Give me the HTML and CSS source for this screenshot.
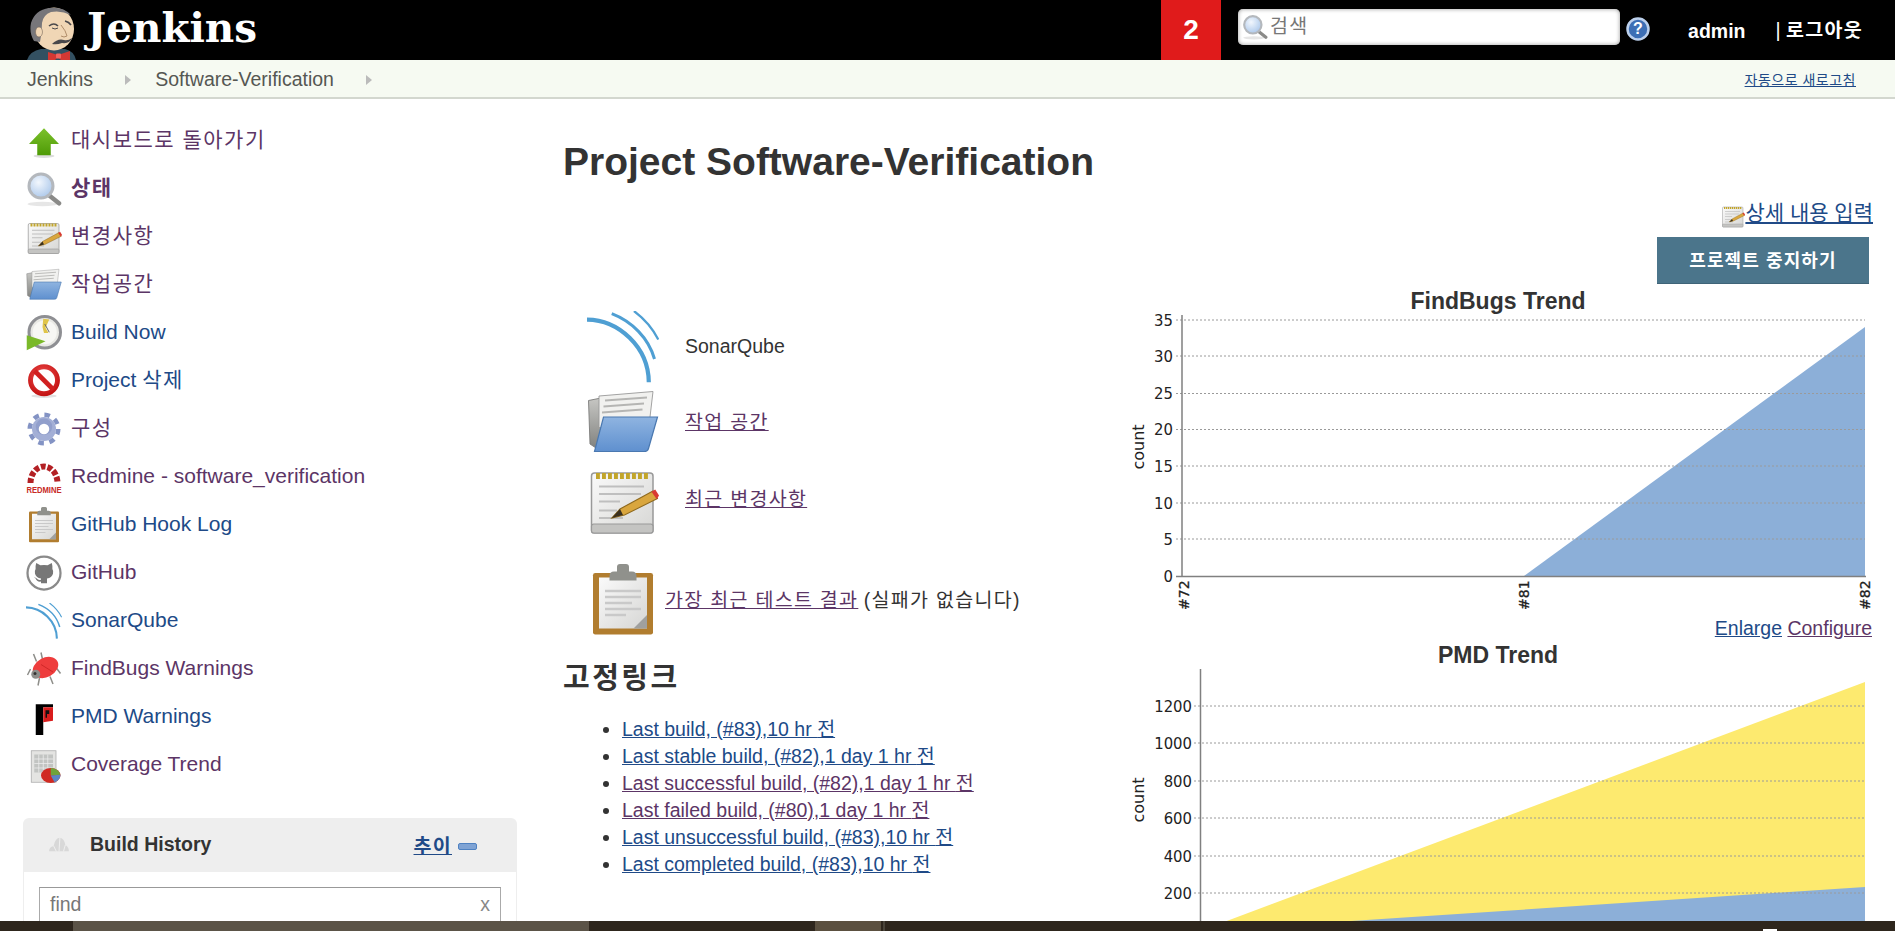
FILE: index.html
```html
<!DOCTYPE html>
<html lang="ko">
<head>
<meta charset="utf-8">
<title>Software-Verification [Jenkins]</title>
<link rel="stylesheet" href="styles.css">
</head>
<body>
<svg class="defs" aria-hidden="true">
  <defs>
    <linearGradient id="gGreen" x1="0" y1="0" x2="0" y2="1"><stop offset="0" stop-color="#7cc22c"/><stop offset="1" stop-color="#4e9a06"/></linearGradient>
    <linearGradient id="gBlue" x1="0" y1="0" x2="0" y2="1"><stop offset="0" stop-color="#8fb4e0"/><stop offset="1" stop-color="#5f90cf"/></linearGradient>
    <linearGradient id="gPaper" x1="0" y1="0" x2="1" y2="1"><stop offset="0" stop-color="#fafafa"/><stop offset="1" stop-color="#d6d6d4"/></linearGradient>
    <linearGradient id="gGray" x1="0" y1="0" x2="0" y2="1"><stop offset="0" stop-color="#c9c9c6"/><stop offset="1" stop-color="#7f807d"/></linearGradient>
    <radialGradient id="gLens" cx=".4" cy=".35" r=".7"><stop offset="0" stop-color="#f2f7fd"/><stop offset="1" stop-color="#a9c6ea"/></radialGradient>
    <radialGradient id="gRed" cx=".45" cy=".35" r=".7"><stop offset="0" stop-color="#f2504f"/><stop offset="1" stop-color="#c41414"/></radialGradient>
    <symbol id="i-up" viewBox="0 0 48 48"><ellipse cx="24" cy="44" rx="14" ry="2.5" fill="#ddd"/><path d="M24 7 44 28H33V43H15V28H4Z" fill="url(#gGreen)"/></symbol>
    <symbol id="i-search" viewBox="0 0 48 48"><ellipse cx="22" cy="44" rx="20" ry="3" fill="#e6e6e6"/><path d="M29 31 44 43" stroke="#8a8a88" stroke-width="6" stroke-linecap="round"/><circle cx="20" cy="20" r="16" fill="url(#gLens)" stroke="#b4b8bd" stroke-width="4"/></symbol>
    <symbol id="i-note" viewBox="0 0 48 48"><rect x="3" y="6" width="41" height="40" rx="2" fill="url(#gPaper)" stroke="#999" stroke-width="1"/><rect x="3" y="40" width="41" height="6" rx="1.5" fill="#c4c4c2" stroke="#999" stroke-width=".8"/><path d="M6 8H41" stroke="#c2a52a" stroke-width="4" stroke-dasharray="2.6 1.4"/><path d="M8 15H38M8 20H36M8 25H22M8 31H20M8 36H24" stroke="#bfbfbf" stroke-width="1.4"/><path d="M16.500 36 22 30 44 18 47 23 25 34Z" fill="#d9a63e" stroke="#8f6a1e" stroke-width=".7"/><path d="M43 18.500 46.500 23.500 48 21 45.500 17Z" fill="#d93a32"/><path d="M16.500 36 22 30 24 34Z" fill="#3a3020"/></symbol>
    <symbol id="i-folder" viewBox="0 0 48 48"><path d="M1 9 16 6 13 42H8L2 38Z" fill="url(#gGray)" stroke="#7c7c7a" stroke-width=".6"/><path d="M8 6 44 3 42 20 40 27H8Z" fill="#f1f1ef" stroke="#999" stroke-width=".6"/><path d="M12 9 40 7M11 13 38 11M10 17 37 15" stroke="#b5b5b3" stroke-width="1.2"/><path d="M11 20H47L41 41Q40.500 43 38 43H5Z" fill="url(#gBlue)" stroke="#4a78b0" stroke-width=".8"/></symbol>
    <symbol id="i-build" viewBox="0 0 48 48"><circle cx="25" cy="23" r="21" fill="#e8e8e4" stroke="#8e8f93" stroke-width="4"/><circle cx="25" cy="23" r="16" fill="#f7f7f4"/><path d="M23 5 31 6 26 17 30 24 24 24 22 16Z" fill="#e0c54a"/><path d="M25 12 31 23" stroke="#666" stroke-width="1.300"/><path d="M1 27 26 35 1 47Z" fill="#7ab929"/></symbol>
    <symbol id="i-no" viewBox="0 0 48 48"><ellipse cx="24" cy="44" rx="17" ry="2.500" fill="#e2e2e2"/><circle cx="24" cy="23" r="18" fill="#fff" stroke="url(#gRed)" stroke-width="6.500"/><path d="M11.500 10.500 36.500 35.500" stroke="#d12020" stroke-width="6.500"/></symbol>
    <symbol id="i-gear" viewBox="0 0 48 48"><circle cx="24" cy="24" r="19" fill="none" stroke="#8393c4" stroke-width="6" stroke-dasharray="7.400 7.520"/><circle cx="24" cy="24" r="16" fill="#a3afd6"/><circle cx="24" cy="21" r="11" fill="#8090c2" opacity=".5"/><circle cx="24" cy="24" r="7" fill="#fff"/></symbol>
    <symbol id="i-redmine" viewBox="0 0 48 48"><path d="M6 32A18 22 0 0 1 42 32" fill="none" stroke="#b32024" stroke-width="8" stroke-dasharray="6.500 2.500"/><text x="24" y="45" text-anchor="middle" textLength="47" lengthAdjust="spacingAndGlyphs" class="redmine-word">REDMINE</text></symbol>
    <symbol id="i-clip" viewBox="0 0 48 48"><rect x="4" y="6" width="40" height="41" rx="1.500" fill="#b17d2f"/><rect x="8" y="9" width="32" height="34" fill="url(#gPaper)"/><path d="M12 18H36M12 22H36M12 26H30M12 30H36M12 34H26" stroke="#c9c9c9" stroke-width="1.600"/><path d="M40 43V34L31 43Z" fill="#a0a09e"/><path d="M15 8Q15 5 18 5H20V2Q20 0 22 0H26Q28 0 28 2V5H30Q33 5 33 8V11H15Z" fill="#90918c"/></symbol>
    <symbol id="i-github" viewBox="0 0 48 48"><circle cx="24" cy="24" r="22" fill="#fff" stroke="#8a8a8a" stroke-width="3"/><path transform="translate(4.800 5) scale(.8)" d="M11 7 18 11Q24 9.500 30 11L37 7Q38.500 12 38 17Q40 20 39 25Q37 32 29 33V41H19V38Q12 39 10 33L7 30 12 33Q14 36 19 35V33Q11 32 9 25Q8 20 10 17Q9.500 12 11 7Z" fill="#777"/></symbol>
    <symbol id="i-sonar" viewBox="0 0 48 48"><g fill="none" stroke="#4f9fd3" stroke-linecap="butt"><path d="M0 5.800C21 6 41 24 41.200 47.500" stroke-width="2.800"/><path d="M16.500 1.800C30 7 41 18 45 32" stroke-width="2"/><path d="M31.300 0C38 5 44 12 47.500 19" stroke-width="1.500"/></g></symbol>
    <symbol id="i-bug" viewBox="0 0 48 48"><g stroke="#8e8e8a" stroke-width="2" fill="none"><path d="M10 4 14 14M20 2 22 11M40 22 46 30M32 34 36 44M18 36 16 46M6 24 2 32"/></g><ellipse cx="26" cy="22" rx="18" ry="13" transform="rotate(-28 26 22)" fill="#ee3d3d"/><circle cx="13" cy="31" r="6" fill="#8e8e8a"/><circle cx="12" cy="30" r="2" fill="#333"/><path d="M20 18 36 28" stroke="#c42020" stroke-width="1"/></symbol>
    <symbol id="i-pmd" viewBox="0 0 48 48"><path d="M13 7H36V11H23V48H13Z" fill="#000"/><path d="M23 11H36V29L23 31Z" fill="#d91c1c"/><path d="M26 15H31V20H28V25H26Z" fill="#111"/></symbol>
    <symbol id="i-cov" viewBox="0 0 48 48"><rect x="7" y="5" width="33" height="42" fill="#e4e4e2" stroke="#aaa"/><path d="M11 10H36V34H11Z" fill="#c2c4c2"/><path d="M11 16H36M11 22H36M11 28H36M17 10V34M23 10V34M29 10V34" stroke="#eee" stroke-width="1"/><ellipse cx="33" cy="38" rx="13" ry="10" fill="#d02a22"/><path d="M33 38V28Q43 28 46 37Z" fill="#6fa33a"/><path d="M33 38 46 37Q46 44 38 47Z" fill="#5a86c4"/></symbol>
    <symbol id="i-help" viewBox="0 0 48 48"><circle cx="24" cy="24" r="21" fill="#3d6fb5" stroke="#bcd0ec" stroke-width="5"/></symbol>
  </defs>
</svg>

<div class="page">
  <header class="top">
    <div class="brand">
      <svg class="butler" viewBox="0 0 50 53" aria-hidden="true">
        <path d="M0 53Q3 44 14 42H38Q47 44 49 53Z" fill="#335061"/>
        <ellipse cx="27" cy="22" rx="20" ry="21.500" fill="#f0d6b5"/>
        <path d="M7 34Q2 26 4 16Q8 3 22 1Q36-1 44 8Q34 3 24 5Q16 8 15 16Q15 26 13 35Z" fill="#77767a"/>
        <ellipse cx="12" cy="25" rx="3.500" ry="5" fill="#f0d6b5" stroke="#7a6a5c" stroke-width=".6"/>
        <path d="M22 19Q27 15 31 19M38 14Q42 15 44 18" stroke="#49484b" stroke-width="1.600" fill="none"/>
        <path d="M25 21Q28 23 31 21" stroke="#49484b" stroke-width="1" fill="none"/>
        <path d="M34 18Q39 24 40 29 37 31 34 29" stroke="#b08d6a" stroke-width="1" fill="none"/>
        <path d="M25 37Q31 31 37 33 41 34 45 31 43 37 35 36 30 38 25 37Z" fill="#49484b"/>
        <path d="M21 45 31 48 43 44 43 53H34L31 50 28 53H21Z" fill="#d33833"/>
        <rect x="29" y="46.500" width="5" height="5" rx="1" fill="#f0645f"/>
      </svg>
      <span class="wordmark">Jenkins</span>
    </div>
    <div class="top-right">
      <div class="count">2</div>
      <div class="search">
        <svg class="search-icon"><use href="#i-search"/></svg>
        <span class="search-hint ko">검색</span>
      </div>
      <svg class="help" viewBox="0 0 48 48" aria-hidden="true"><use href="#i-help"/><text x="24" y="34" text-anchor="middle" class="help-mark">?</text></svg>
      <b class="user">admin</b>
      <span class="logout"><span class="pipe">|</span> <b class="ko">로그아웃</b></span>
    </div>
  </header>

  <nav class="crumbs">
    <span class="crumb">Jenkins</span><i class="crumb-arrow"></i>
    <span class="crumb">Software-Verification</span><i class="crumb-arrow"></i>
    <a class="refresh ko" href="#">자동으로 새로고침</a>
  </nav>

  <div class="body-row">
    <aside class="side">
      <ul class="tasks">
        <li><svg class="ti"><use href="#i-up"/></svg><a class="ko v">대시보드로 돌아가기</a></li>
        <li><svg class="ti"><use href="#i-search"/></svg><a class="ko v now">상태</a></li>
        <li><svg class="ti"><use href="#i-note"/></svg><a class="ko v">변경사항</a></li>
        <li><svg class="ti"><use href="#i-folder"/></svg><a class="ko v">작업공간</a></li>
        <li><svg class="ti"><use href="#i-build"/></svg><a class="n">Build Now</a></li>
        <li><svg class="ti"><use href="#i-no"/></svg><a class="n">Project <span class="ko">삭제</span></a></li>
        <li><svg class="ti"><use href="#i-gear"/></svg><a class="ko v">구성</a></li>
        <li><svg class="ti"><use href="#i-redmine"/></svg><a class="v">Redmine - software_verification</a></li>
        <li><svg class="ti"><use href="#i-clip"/></svg><a class="n">GitHub Hook Log</a></li>
        <li><svg class="ti"><use href="#i-github"/></svg><a class="v">GitHub</a></li>
        <li><svg class="ti"><use href="#i-sonar"/></svg><a class="n">SonarQube</a></li>
        <li><svg class="ti"><use href="#i-bug"/></svg><a class="v">FindBugs Warnings</a></li>
        <li><svg class="ti"><use href="#i-pmd"/></svg><a class="n">PMD Warnings</a></li>
        <li><svg class="ti"><use href="#i-cov"/></svg><a class="v">Coverage Trend</a></li>
      </ul>
      <section class="history">
        <div class="history-head">
          <svg class="cloud" viewBox="0 0 24 20" aria-hidden="true"><path d="M1 17Q1 12 6 11 8 2 13 2 18 3 19 10 23 12 23 17Z" fill="#d8d8d8"/><path d="M13 2 12 17M6 11 9 17M19 10 17 17" stroke="#f2f2f2" stroke-width="1"/></svg>
          <b class="history-title">Build History</b>
          <a class="trend ko" href="#">추이</a>
          <span class="collapse"></span>
        </div>
        <div class="history-body">
          <div class="find"><span>find</span><span class="find-x">x</span></div>
        </div>
      </section>
    </aside>

    <main class="main">
      <h1 class="title">Project Software-Verification</h1>
      <div class="desc-row">
        <svg class="desc-icon"><use href="#i-note"/></svg><a class="desc-link ko" href="#">상세 내용 입력</a>
      </div>
      <div class="btn-row"><button class="disable ko" type="button">프로젝트 중지하기</button></div>
      <div class="cols">
        <div class="col-left">
          <div class="mrow"><svg class="mi"><use href="#i-sonar"/></svg><span class="mtext">SonarQube</span></div>
          <div class="mrow"><svg class="mi"><use href="#i-folder"/></svg><a class="mtext link-v ko" href="#">작업 공간</a></div>
          <div class="mrow third"><svg class="mi"><use href="#i-note"/></svg><a class="mtext link-v ko" href="#">최근 변경사항</a></div>
          <div class="mrow tests"><svg class="mi"><use href="#i-clip"/></svg><span class="mtext tight"><a class="link-v ko" href="#">가장 최근 테스트 결과</a> <span class="ko">(실패가 없습니다)</span></span></div>
          <h2 class="perma ko">고정링크</h2>
          <ul class="permalinks">
            <li><a class="link-n" href="#">Last build, (#83),10 hr <span class="ko">전</span></a></li>
            <li><a class="link-n" href="#">Last stable build, (#82),1 day 1 hr <span class="ko">전</span></a></li>
            <li><a class="link-v" href="#">Last successful build, (#82),1 day 1 hr <span class="ko">전</span></a></li>
            <li><a class="link-v" href="#">Last failed build, (#80),1 day 1 hr <span class="ko">전</span></a></li>
            <li><a class="link-n" href="#">Last unsuccessful build, (#83),10 hr <span class="ko">전</span></a></li>
            <li><a class="link-n" href="#">Last completed build, (#83),10 hr <span class="ko">전</span></a></li>
          </ul>
        </div>
        <div class="col-right">
          <div class="chart-title">FindBugs Trend</div>
          <svg class="chart-a" viewBox="1125 314 750 300" role="img" aria-label="FindBugs Trend chart">
            <polygon class="area-blue" points="1524,576 1865,327 1865,576"/>
            <g class="grid">
              <path d="M1176 320H1865M1176 356H1865M1176 393.500H1865M1176 429.500H1865M1176 466H1865M1176 503H1865M1176 539H1865"/>
            </g>
            <path class="axis" d="M1182 315V577M1176 576.500H1866"/>
            <g class="ylabels">
              <text x="1173" y="326">35</text><text x="1173" y="362">30</text><text x="1173" y="399">25</text><text x="1173" y="435">20</text><text x="1173" y="472">15</text><text x="1173" y="509">10</text><text x="1173" y="545">5</text><text x="1173" y="582">0</text>
            </g>
            <g class="xlabels">
              <text transform="translate(1189 610) rotate(-90)">#72</text>
              <text transform="translate(1529 610) rotate(-90)">#81</text>
              <text transform="translate(1870 610) rotate(-90)">#82</text>
            </g>
            <text class="ytitle" transform="translate(1144 447) rotate(-90)">count</text>
          </svg>
          <div class="chart-links"><a class="link-n" href="#">Enlarge</a> <a class="link-v" href="#">Configure</a></div>
          <div class="chart-title">PMD Trend</div>
          <svg class="chart-b" viewBox="1125 668 750 264" role="img" aria-label="PMD Trend chart">
            <polygon class="area-yellow" points="1200,931 1865,682 1865,931"/>
            <polygon class="area-blue" points="1200,931 1865,887 1865,931"/>
            <g class="grid">
              <path d="M1194 706H1865M1194 743H1865M1194 781H1865M1194 818H1865M1194 856H1865M1194 893H1865"/>
            </g>
            <path class="axis" d="M1200.500 669V931"/>
            <g class="ylabels">
              <text x="1192" y="712">1200</text><text x="1192" y="749">1000</text><text x="1192" y="787">800</text><text x="1192" y="824">600</text><text x="1192" y="862">400</text><text x="1192" y="899">200</text>
            </g>
            <text class="ytitle" transform="translate(1144 800) rotate(-90)">count</text>
          </svg>
        </div>
      </div>
    </main>
  </div>

  <footer class="taskbar">
    <span class="seg seg-a"></span><span class="seg seg-b"></span><span class="seg seg-c"></span><span class="seg seg-d"></span><span class="seg seg-e"></span><span class="tray-glyph"></span>
  </footer>
</div>
</body>
</html>
```

FILE: styles.css
```css
* { box-sizing: border-box; }
html, body { margin: 0; padding: 0; height: 100%; overflow: hidden; }
body { font-family: "Liberation Sans", "Noto Sans CJK KR", sans-serif; font-size: 19.5px; color: #333; background: #fff; }
.defs { position: absolute; width: 0; height: 0; }
.ko { letter-spacing: 1.3px; }
a { color: #204a87; }
.page { height: 931px; display: flex; flex-direction: column; }

/* header */
.top { height: 60px; flex: none; background: #000; display: flex; justify-content: space-between; }
.brand { display: flex; align-items: flex-start; padding-left: 27px; }
.butler { width: 50px; height: 53px; margin-top: 7px; display: block; }
.wordmark { font-family: "DejaVu Serif", serif; font-weight: 700; font-size: 40.5px; line-height: 57px; color: #fff; margin-left: 10px; }
.top-right { display: flex; align-items: flex-start; padding-right: 32px; }
.count { width: 60px; height: 60px; background: #e01b1b; color: #fff; font-weight: 700; font-size: 28px; line-height: 60px; text-align: center; }
.search { width: 382px; height: 36px; margin: 9px 0 0 17px; background: #fff; border-radius: 5px; box-shadow: inset 0 0 4px #999; display: flex; align-items: center; padding-left: 4px; }
.search-icon { width: 26px; height: 26px; }
.search-hint { color: #777; margin-left: 2px; line-height: 26px; margin-top: -3px; }
.help { width: 24px; height: 24px; margin: 17px 0 0 6px; }
.help-mark { font: 700 32px "Liberation Sans", sans-serif; fill: #fff; }
.user { color: #fff; font-size: 19.5px; line-height: 62px; margin-left: 38px; }
.logout { color: #fff; line-height: 60px; margin-left: 30px; }
.logout .pipe { font-weight: 400; }

/* breadcrumb */
.crumbs { height: 39px; flex: none; background: #f6faf2; border-bottom: 2px solid #d3d7cf; display: flex; align-items: center; padding: 0 39px 0 27px; color: #555; }
.crumb { line-height: 36px; color: #555753; }
.crumb-arrow { width: 0; height: 0; margin: 2px 24px 0 32px; border-left: 6px solid #bbb; border-top: 5.5px solid transparent; border-bottom: 5.5px solid transparent; }
.refresh { margin-left: auto; font-size: 14px; letter-spacing: .5px; }

/* layout */
.body-row { flex: 1; min-height: 0; display: flex; overflow: hidden; }
.side { width: 563px; flex: none; padding: 18px 46px 0 23px; }
.tasks { list-style: none; margin: 0; padding: 0; }
.tasks li { height: 48px; display: flex; align-items: center; padding-left: 3px; font-size: 21px; }
.ti { width: 36px; height: 36px; flex: none; margin-right: 9px; }
.tasks a { line-height: 28px; text-decoration: none; margin-top: -2px; }
.tasks a.n { color: #204a87; }
.tasks a.v { color: #5c3566; }
.tasks a.now { font-weight: 700; }
.tasks .ko { letter-spacing: 1.5px; }
.redmine-word { font: 700 12px "Liberation Sans", sans-serif; fill: #c72a26; }

/* build history */
.history { margin-top: 29px; border-radius: 6px 6px 0 0; }
.history-head { height: 53px; background: #eee; border-radius: 6px 6px 0 0; display: flex; align-items: center; padding: 0 39px 0 25px; }
.cloud { width: 22px; height: 18px; margin-right: 20px; }
.history-title { color: #333; }
.trend { margin-left: auto; font-weight: 700; }
.collapse { width: 19px; height: 7px; margin-left: 6px; margin-right: 1px; margin-top: 3px; background: #7fa3d4; border-radius: 2px; border: 1.500px solid #4f82c2; }
.history-body { border: 1px solid #eee; padding: 15px 15px 0; }
.find { height: 60px; border: 1px solid #aaa; border-top-color: #999; padding: 0 10px; display: flex; justify-content: space-between; color: #777; line-height: 33px; }
.find-x { color: #888; }

/* main */
.main { flex: 1; min-width: 0; padding: 0 22px 0 0; }
.title { margin: 41px 0 0; font-size: 39px; line-height: 44px; font-weight: 700; color: #333; }
.desc-row { margin-top: 14px; height: 30px; display: flex; justify-content: flex-end; align-items: center; }
.desc-icon { width: 24px; height: 24px; margin-top: 6px; }
.desc-link { font-size: 21px; line-height: 30px; letter-spacing: 0; }
.btn-row { margin-top: 9px; display: flex; justify-content: flex-end; padding-right: 4px; }
.disable { width: 212px; height: 47px; background: #4b758b; border: 0; border-bottom: 1px solid #3f6478; color: #fff; font: 700 18px "Liberation Sans", "Noto Sans CJK KR", sans-serif; letter-spacing: 1.100px; padding: 0 0 3px; }
.cols { display: flex; margin-top: 4px; }
.col-left { width: 562px; flex: none; padding-top: 23px; }
.col-right { width: 750px; flex: none; }

.mrow { display: flex; align-items: center; height: 72px; padding-left: 24px; margin-bottom: 4px; }
.mrow.third { margin-top: 5px; }
.mi { width: 72px; height: 72px; flex: none; margin-right: 26px; }
.mtext { line-height: 26px; margin-top: -3px; }
.mrow.tests { margin-top: 28px; margin-bottom: 0; }
.mrow.tests .mi { margin-right: 6px; }
.tight { margin-top: 0; }
.link-v { color: #5c3566; }
.link-n { color: #204a87; }
.mtext.ko, .tight .ko { letter-spacing: 1.300px; }
.perma { margin: 24px 0 0; font-size: 29px; line-height: 36px; font-weight: 700; color: #333; letter-spacing: 2.500px; }
.permalinks { margin: 20px 0 0; padding: 0 0 0 59px; }
.permalinks li { line-height: 27px; height: 27px; }
.permalinks .ko { letter-spacing: 0; }

/* charts */
.chart-title { height: 26px; line-height: 26px; text-align: center; font-weight: 700; font-size: 23px; color: #333; padding-right: 4px; }
.chart-a { display: block; width: 750px; height: 300px; overflow: visible; }
.chart-b { display: block; width: 750px; height: 264px; }
.chart-links { height: 28px; line-height: 28px; text-align: right; padding-right: 3px; }
.area-blue { fill: #8cafd8; }
.area-yellow { fill: #fdea6f; }
.grid path { stroke: #9a9a9a; stroke-width: 1; stroke-dasharray: 2 2; fill: none; }
.axis { stroke: #808080; stroke-width: 1.500; fill: none; }
.ylabels text { font: 16.500px "DejaVu Sans Condensed", "DejaVu Sans", sans-serif; fill: #222; text-anchor: end; }
.xlabels text { font: 14px "DejaVu Sans", sans-serif; fill: #222; stroke: #222; stroke-width: .3px; }
.ytitle { font: 16px "DejaVu Sans", sans-serif; fill: #222; text-anchor: middle; }

/* taskbar */
.taskbar { height: 10px; flex: none; background: #2e261d; display: flex; overflow: hidden; }
.seg { display: block; height: 10px; }
.seg-a { width: 73px; }
.seg-b { width: 516px; background: #5b5347; }
.seg-c { width: 226px; }
.seg-d { width: 66px; background: #5b5040; }
.seg-e { width: 2px; background: #4a443a; margin-left: 2px; }
.tray-glyph { width: 14px; height: 2px; background: #fff; margin: 8px 0 0 878px; }
```
